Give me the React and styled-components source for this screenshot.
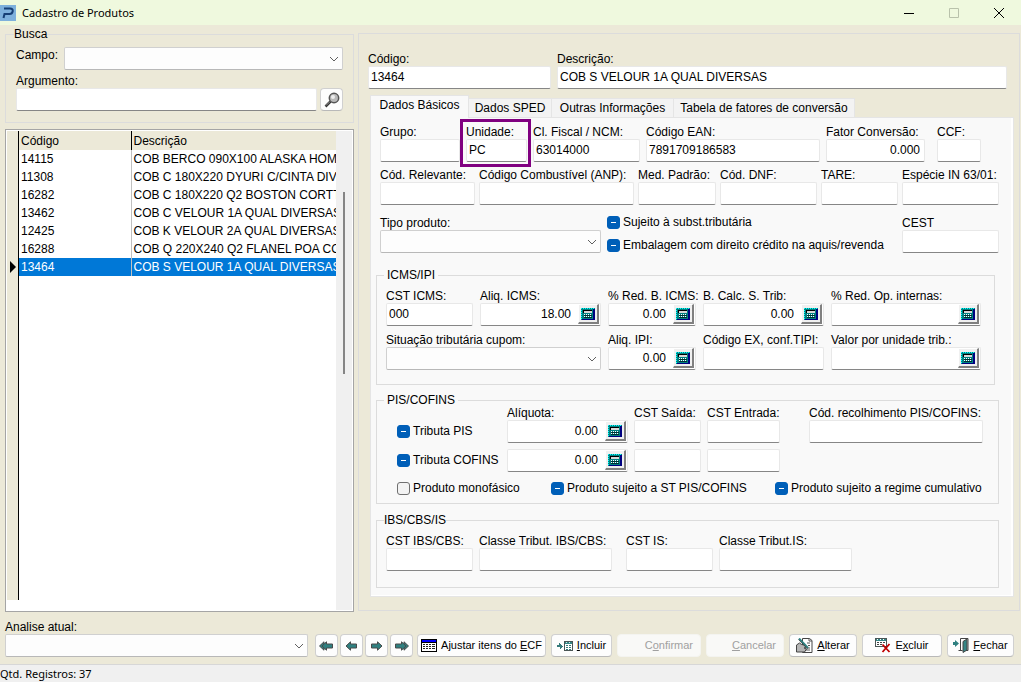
import React, { useEffect, useId, useRef } from "react";
import styled, { createGlobalStyle, css } from "styled-components";

const GlobalStyle = createGlobalStyle`
  *, *::before, *::after {
    box-sizing: border-box;
  }
  body {
    margin: 0;
    background: #ece9d8;
    color: #000;
    font: 12px/15px "Liberation Sans", Arial, sans-serif;
  }
  button, input, select {
    font: inherit;
    color: inherit;
    margin: 0;
  }
`;

const Window = styled.div`
  display: flex;
  flex-direction: column;
  min-height: 100vh;
  overflow: hidden;
`;

const TitleBar = styled.header`
  display: flex;
  align-items: center;
  height: 25px;
  background: #eff9de;
`;

const Title = styled.h1`
  flex: 1;
  margin: 0 0 0 6px;
  font: 11px/16px "Noto Sans", sans-serif;
`;

const WindowButton = styled.button`
  display: flex;
  align-items: center;
  justify-content: center;
  width: 45px;
  height: 25px;
  padding: 0;
  border: 0;
  background: none;
`;

const Main = styled.main`
  display: grid;
  grid-template-columns: 349fr 662fr;
  gap: 4px;
  flex: 1;
  padding: 4px 1px 0 5px;
`;

const Side = styled.div`
  display: flex;
  flex-direction: column;
  gap: 6px;
  min-width: 0;
`;

const Group = styled.fieldset`
  min-width: 0;
  margin: ${(p) => p.$margin || "0"};
  padding: ${(p) => p.$pad};
  border: 1px solid #dcdcdc;
`;

const Legend = styled.legend`
  padding: 0 ${(p) => (p.$tight ? 0 : 3)}px;
  margin-left: -2px;
  font-size: 12px;
  line-height: 10px;
`;

const Stack = styled.div`
  display: flex;
  flex-direction: column;
  gap: ${(p) => p.$gap || 0}px;
  padding: ${(p) => p.$pad || "0"};
`;

const Row = styled.div`
  display: flex;
  align-items: ${(p) => p.$align || "flex-end"};
  gap: ${(p) => p.$gap || 6}px;
  padding: ${(p) => p.$pad || "0"};
`;

const Cell = styled.div`
  position: relative;
  flex: ${(p) => p.$w} 1 0;
  min-width: 0;
  white-space: nowrap;
  ${(p) =>
    p.$marked &&
    css`
      &::after {
        content: "";
        position: absolute;
        inset: -5px -4px -5px -6px;
        border: 3px solid #800080;
        pointer-events: none;
      }
    `}
`;

const Label = styled.label`
  display: block;
  height: 15px;
  line-height: 16px;
  white-space: nowrap;
`;

const boxed = css`
  height: 23px;
  border: 1px solid #e8e8e8;
  border-bottom-color: #868686;
  border-radius: 2px;
  background: #fff;
`;

const TextInput = styled.input`
  ${boxed}
  display: block;
  width: 100%;
  min-width: 0;
  padding: 0 4px 2px 2px;
  outline: none;
  text-align: ${(p) => (p.$right ? "right" : "left")};
`;

const NumberBox = styled.div`
  ${boxed}
  display: flex;
  padding: 0 1px 0 0;
`;

const NumberInput = styled.input`
  flex: 1;
  width: 0;
  min-width: 0;
  padding: 0 7px 0 2px;
  border: 0;
  outline: none;
  background: none;
  text-align: right;
`;

const CalcButton = styled.button`
  display: flex;
  align-items: center;
  justify-content: center;
  width: 21px;
  height: 20px;
  padding: 0;
  border: 1px solid #fff;
  border-right: 2px solid #808080;
  border-bottom: 2px solid #808080;
  background: #f0f0f0;
`;

const SelectBox = styled.div`
  position: relative;
  flex: 1;
  svg {
    position: absolute;
    right: 4px;
    top: 9px;
    pointer-events: none;
  }
`;

const Select = styled.select`
  display: block;
  appearance: none;
  width: 100%;
  height: 23px;
  padding: 0 20px 0 4px;
  border: 1px solid #d0d0d0;
  border-bottom-color: #b8b8b8;
  border-radius: 2px;
  background: #fdfdfd;
`;

const CheckLabel = styled.label`
  display: flex;
  align-items: center;
  gap: 3px;
  height: 15px;
  white-space: nowrap;
`;

const Check = styled.input`
  appearance: none;
  flex: none;
  display: grid;
  place-items: center;
  width: 13px;
  height: 13px;
  border: 1px solid #707070;
  border-radius: 3px;
  background: #f3f3f3;
  &:indeterminate {
    border-color: #005fb8;
    background: #005fb8;
  }
  &:indeterminate::after {
    content: "";
    width: 5px;
    height: 1px;
    background: #fff;
  }
`;

const IconButton = styled.button`
  display: flex;
  align-items: center;
  justify-content: center;
  flex: none;
  gap: 4px;
  width: ${(p) => p.$w || 23}px;
  height: 23px;
  padding: 0;
  border: 1px solid #d0d0d0;
  border-bottom-color: #b9b9b9;
  border-radius: 4px;
  background: #fdfdfd;
  font-size: 11px;
  line-height: 17px;
  white-space: nowrap;
  &:disabled {
    justify-content: flex-end;
    padding-right: 7px;
    border-color: #f4f4f0;
    background: #f9f9f7;
    color: #a0a0a0;
  }
`;

const Grid = styled.div`
  display: flex;
  flex: 1;
  padding: 1px;
  border: 1px solid #a5a5a5;
  background: #fff;
`;

const Gutter = styled.div`
  width: 12px;
  margin-bottom: 10px;
  padding-top: 19px;
  border-right: 1px solid #000;
  background: #ece9d8;
`;

const GutterRow = styled.div`
  display: flex;
  align-items: center;
  justify-content: flex-end;
  height: 18px;
  padding-right: 2px;
`;

const Table = styled.table`
  width: 100%;
  table-layout: fixed;
  border-collapse: collapse;
`;

const TableArea = styled.div`
  flex: 1;
  min-width: 0;
`;

const cellStyle = css`
  padding: 1px 2px 0;
  overflow: hidden;
  text-align: left;
  font-weight: normal;
  white-space: nowrap;
  &:first-child {
    width: 112px;
  }
`;

const Th = styled.th`
  ${cellStyle}
  height: 19px;
  background: #ece9d8;
  &:first-child {
    border-right: 1px solid #000;
  }
`;

const Td = styled.td`
  ${cellStyle}
  height: 18px;
  &:first-child {
    border-right: 1px solid #c0c0c0;
  }
`;

const Tr = styled.tr`
  ${(p) =>
    p.$selected &&
    css`
      background: #0078d7;
      color: #fff;
    `}
`;

const ScrollTrack = styled.div`
  flex: none;
  width: 16px;
  padding: 61px 0 0 7px;
  background: #f0f0f0;
`;

const ScrollThumb = styled.div`
  width: 2px;
  height: 182px;
  background: #858585;
`;

const Detail = styled.section`
  margin: 4px 0 1px;
  padding: 17px 5px 11px 9px;
  min-width: 0;
  border: 1px solid #dcdcdc;
`;

const Tabs = styled.div`
  display: flex;
  align-items: flex-end;
  height: 22px;
  margin: 6px 0 0 2px;
`;

const Tab = styled.button`
  width: ${(p) => p.$w}px;
  height: 19px;
  padding: 0;
  border: 1px solid #e5e5e5;
  border-width: 1px 1px 0 0;
  background: #f3f3f3;
  white-space: nowrap;
  &[aria-selected="true"] {
    height: 23px;
    margin-bottom: -1px;
    padding-bottom: 3px;
    border-left-width: 1px;
    background: #f9f9f9;
    z-index: 1;
  }
`;

const Panel = styled.div`
  margin: 0 0 0 2px;
  padding: 6px 14px 8px 5px;
  border: 1px solid #e5e5e5;
  background: #f9f9f9;
  box-shadow: inset -2px -1px #fff;
`;

const Footer = styled.footer`
  display: flex;
  align-items: flex-end;
  padding: 7px 7px 7px 5px;
`;

const StatusBar = styled.div`
  height: 18px;
  border-top: 1px solid #d7d7d7;
  background: #f0f0f0;
  font: 11px/18px "Noto Sans", sans-serif;
`;

/* ---------- icons ---------- */

const PIcon = () => (
  <svg width="16" height="16" viewBox="0 0 16 16">
    <rect width="16" height="16" fill="#7eb0dc" />
    <path
      d="M4 3.500h6q3.200 0 2.700 2.700T9.500 9H4.500L3.500 13"
      fill="none"
      stroke="#173f75"
      strokeWidth="2"
    />
  </svg>
);

const Chevron = () => (
  <svg width="10" height="6" viewBox="0 0 10 6">
    <path d="M1 1l4 4 4-4" fill="none" stroke="#606060" />
  </svg>
);

const CalcIcon = () => (
  <svg width="14" height="12" viewBox="0 0 14 12" shapeRendering="crispEdges">
    <path d="M0 0h14v12H0z" fill="#008080" />
    <path d="M12 1h2v11H1v-1h11z" fill="#000080" />
    <path
      d="M0 0h1v1H0zM2 0h1v1H2zM4 0h1v1H4zM6 0h1v1H6zM8 0h1v1H8zM10 0h1v1h-1zM12 0h1v1h-1zM0 2h1v1H0zM0 4h1v1H0zM0 6h1v1H0zM0 8h1v1H0zM0 10h1v1H0z"
      fill="#00ffff"
    />
    <path d="M2 2h9v3H2z" fill="#000" />
    <path d="M3 3h8v2H3z" fill="#d8d8d8" />
    <path d="M3 7h8v1H3zM3 9h8v1H3z" fill="#003030" />
    <path
      d="M3 6h1v1H3zM5 6h1v1H5zM7 6h1v1H7zM9 6h1v1H9zM3 8h1v1H3zM5 8h1v1H5zM7 8h1v1H7zM9 8h1v1H9z"
      fill="#fff"
    />
  </svg>
);

const SearchIcon = () => (
  <svg width="16" height="16" viewBox="0 0 16 16">
    <path d="M1.500 14.500l5-5" stroke="#333" strokeWidth="2.500" />
    <path d="M2 13.500l4-4" stroke="#999" strokeWidth="1" />
    <circle cx="10" cy="6" r="4.700" fill="#b9b9b9" stroke="#555" strokeWidth="1.500" />
    <circle cx="9" cy="5" r="2" fill="#ededed" />
  </svg>
);

const ArrowSvg = styled.svg`
  transform: ${(p) => (p.$right ? "scaleX(-1)" : "none")};
`;

const ArrowIcon = ({ double, right }) => (
  <ArrowSvg
    $right={right}
    width={double ? 15 : 13}
    height="10"
    viewBox={double ? "-2 0 15 10" : "0 0 13 10"}
  >
    {double && <path d="M-1.500 5L3 .8v8.400z" fill="#2f8080" stroke="#4a4a4a" />}
    <path d="M1 5L5.500.8V3h6v4h-6v2.200z" fill="#2f8080" stroke="#4a4a4a" />
  </ArrowSvg>
);

const TableIcon = () => (
  <svg width="16" height="13" viewBox="0 0 16 13" shapeRendering="crispEdges">
    <path d="M0 0h16v13H0z" />
    <path d="M1 1h14v2H1z" fill="#0000ff" />
    <path d="M1 4h14v8H1z" fill="#fff" />
    <path
      d="M2 5h2v1H2zM5 5h2v1H5zM8 5h2v1H8zM11 5h3v1h-3zM2 7h2v1H2zM5 7h2v1H5zM8 7h2v1H8zM11 7h3v1h-3zM2 9h2v1H2zM5 9h2v1H5zM8 9h2v1H8zM11 9h3v1h-3z"
      fill="#222"
    />
  </svg>
);

const AddIcon = () => (
  <svg width="16" height="10" viewBox="0 0 16 10" shapeRendering="crispEdges">
    <path d="M0 4h2V2h1v1h1v1h1v1h1v1H5v1H4v1H3V6H0z" fill="#357a7a" />
    <path d="M7 0h9v10H7z" fill="#4a5555" />
    <path d="M8 1h7v2H8z" fill="#358585" />
    <path d="M9 1h1v1H9zM12 1h1v1h-1z" fill="#cde5e5" />
    <path d="M8 3h7v6H8z" fill="#fff" />
    <path
      d="M9 4h2v1H9zM12 4h2v1h-2zM9 6h2v1H9zM12 6h2v1h-2zM9 8h2v1H9zM12 8h2v1h-2z"
      fill="#357a7a"
    />
  </svg>
);

const EditIcon = () => (
  <svg width="17" height="15" viewBox="0 0 17 15">
    <path d="M6.500.5h7l2.500 2v12H6.500z" fill="#fff" stroke="#444" />
    <path d="M13 .5V3h3M11 5h3M12 7.500h2M11 10h3M10 12h4" fill="none" stroke="#555" />
    <path
      d="M.5 14V7l3-2 2 1.500 3 .5 1.500 2-2 1 2.500 1-2 3z"
      fill="#b5b5b5"
      stroke="#444"
    />
    <path d="M3 .5l9 9.500" stroke="#2f8080" strokeWidth="2" />
    <path d="M2.500 1.500l9 9.500" stroke="#333" strokeWidth=".7" />
  </svg>
);

const DeleteIcon = () => (
  <svg width="16" height="15" viewBox="0 0 16 15">
    <g shapeRendering="crispEdges">
      <path d="M0 0h12v9H0z" fill="#4a5555" />
      <path d="M1 1h10v2H1z" fill="#358585" />
      <path d="M2 1h1v1H2zM5 1h1v1H5zM8 1h1v1H8z" fill="#fff" />
      <path d="M1 3h10v5H1z" fill="#fff" />
      <path d="M2 4h2v1H2zM5 4h2v1H5zM8 4h2v1H8zM2 6h2v1H2zM5 6h2v1H5z" fill="#444" />
    </g>
    <path d="M7.500 6.500l7 7.500M14.500 6l-7 8" stroke="#c00000" strokeWidth="1.800" />
  </svg>
);

const ExitIcon = () => (
  <svg width="16" height="15" viewBox="0 0 16 15">
    <path d="M0 4h2V2l4 3.500L2 9V7H0z" fill="#2f8080" />
    <path d="M7.500 12.500V.5h7.500v12h-2M5.500 12.500h4" fill="none" stroke="#444" />
    <path d="M10 3.500L14 1v11l-4 2.500z" fill="#358585" stroke="#444" />
  </svg>
);

/* ---------- form parts ---------- */

const DropDown = ({ id }) => (
  <SelectBox>
    <Select id={id}>
      <option value="" />
    </Select>
    <Chevron />
  </SelectBox>
);

const Field = ({ label, name, w, value = "", kind = "text", right, marked }) => {
  const id = useId();
  return (
    <Cell $w={w} $marked={marked}>
      {label && <Label htmlFor={id}>{label}</Label>}
      {kind === "text" && (
        <TextInput id={id} aria-label={name} defaultValue={value} $right={right} />
      )}
      {kind === "calc" && (
        <NumberBox>
          <NumberInput id={id} aria-label={name} defaultValue={value} />
          <CalcButton type="button" aria-label="Calculadora">
            <CalcIcon />
          </CalcButton>
        </NumberBox>
      )}
      {kind === "select" && <DropDown id={id} />}
    </Cell>
  );
};

const CheckField = ({ children, mixed = true }) => {
  const ref = useRef(null);

  useEffect(() => {
    ref.current.indeterminate = mixed;
  }, [mixed]);

  return (
    <CheckLabel>
      <Check type="checkbox" ref={ref} />
      {children}
    </CheckLabel>
  );
};

const products = [
  ["14115", "COB BERCO 090X100 ALASKA HOME"],
  ["11308", "COB C 180X220 DYURI C/CINTA DIV"],
  ["16282", "COB C 180X220 Q2 BOSTON CORTT"],
  ["13462", "COB C VELOUR 1A QUAL DIVERSAS"],
  ["12425", "COB K VELOUR 2A QUAL DIVERSAS"],
  ["16288", "COB Q 220X240 Q2 FLANEL POA CO"],
  ["13464", "COB S VELOUR 1A QUAL DIVERSAS"],
];
const current = "13464";

const SearchGroup = () => (
  <Group $pad="8px 10px 11px 10px">
    <Legend $tight>Busca</Legend>
    <Row $align="flex-start">
      <Label htmlFor="campo">Campo:</Label>
      <DropDown id="campo" />
    </Row>
    <Stack $pad="3px 0 0">
      <Label htmlFor="argumento">Argumento:</Label>
      <Row $gap={3}>
        <TextInput id="argumento" />
        <IconButton type="button" aria-label="Pesquisar">
          <SearchIcon />
        </IconButton>
      </Row>
    </Stack>
  </Group>
);

const ProductGrid = () => (
  <Grid>
    <Gutter>
      {products.map(([code]) => (
        <GutterRow key={code}>
          {code === current && (
            <svg width="6" height="12" viewBox="0 0 6 12">
              <path d="M0 0l6 6-6 6z" />
            </svg>
          )}
        </GutterRow>
      ))}
    </Gutter>
    <TableArea>
      <Table>
        <thead>
          <tr>
            <Th>Código</Th>
            <Th>Descrição</Th>
          </tr>
        </thead>
        <tbody>
          {products.map(([code, name]) => (
            <Tr key={code} $selected={code === current}>
              <Td>{code}</Td>
              <Td>{name}</Td>
            </Tr>
          ))}
        </tbody>
      </Table>
    </TableArea>
    <ScrollTrack>
      <ScrollThumb />
    </ScrollTrack>
  </Grid>
);

const BasicData = () => (
  <Panel role="tabpanel">
    <Stack $gap={5}>
      <Row $pad="0 0 0 4px">
        <Field label="Grupo:" w={80} />
        <Field label="Unidade:" w={61} value="PC" marked />
        <Field label="Cl. Fiscal / NCM:" w={107} value="63014000" />
        <Field label="Código EAN:" w={174} value="7891709186583" />
        <Field label="Fator Conversão:" w={99} value="0.000" right />
        <Cell $w={0} />
        <Field label="CCF:" w={44} />
        <Cell $w={12} />
      </Row>
      <Row $gap={4} $pad="0 0 0 4px">
        <Field label="Cód. Relevante:" w={95} />
        <Field label="Código Combustível (ANP):" w={155} />
        <Field label="Med. Padrão:" w={78} />
        <Field label="Cód. DNF:" w={97} />
        <Field label="TARE:" w={77} />
        <Field label="Espécie IN 63/01:" w={97} />
      </Row>
      <Row $pad="5px 0 0 4px" $align="flex-start">
        <Field label="Tipo produto:" w={221} kind="select" />
        <Cell $w={289}>
          <Stack $gap={8}>
            <CheckField>Sujeito à subst.tributária</CheckField>
            <CheckField>Embalagem com direito crédito na aquis/revenda</CheckField>
          </Stack>
        </Cell>
        <Field label="CEST" w={97} />
      </Row>
    </Stack>

    <Group $margin="17px 4px 0 0" $pad="8px 13px 14px 9px">
      <Legend>ICMS/IPI</Legend>
      <Stack $gap={6}>
        <Row $gap={7}>
          <Field label="CST ICMS:" w={87} value="000" />
          <Field label="Aliq. ICMS:" w={121} value="18.00" kind="calc" />
          <Field label="% Red. B. ICMS:" w={88} value="0.00" kind="calc" />
          <Field label="B. Calc. S. Trib:" w={121} value="0.00" kind="calc" />
          <Field label="% Red. Op. internas:" w={150} kind="calc" />
        </Row>
        <Row $gap={7}>
          <Field label="Situação tributária cupom:" w={215} kind="select" />
          <Field label="Aliq. IPI:" w={88} value="0.00" kind="calc" />
          <Field label="Código EX, conf.TIPI:" w={121} />
          <Field label="Valor por unidade trib.:" w={150} kind="calc" />
        </Row>
      </Stack>
    </Group>

    <Group $margin="10px 0 0" $pad="0 15px 7px 9px">
      <Legend>PIS/COFINS</Legend>
      <Stack $gap={6}>
        <Row $pad="0 0 0 11px">
          <Cell $w={104}>
            <Row $pad="0 0 4px">
              <CheckField>Tributa PIS</CheckField>
            </Row>
          </Cell>
          <Field label="Alíquota:" w={121} value="0.00" kind="calc" />
          <Field label="CST Saída:" w={67} />
          <Field label="CST Entrada:" w={73} />
          <Cell $w={17} />
          <Field label="Cód. recolhimento PIS/COFINS:" w={174} />
        </Row>
        <Row $pad="0 0 0 11px">
          <Cell $w={104}>
            <Row $pad="0 0 4px">
              <CheckField>Tributa COFINS</CheckField>
            </Row>
          </Cell>
          <Field name="Alíquota COFINS" w={121} value="0.00" kind="calc" />
          <Field name="CST Saída COFINS" w={67} />
          <Field name="CST Entrada COFINS" w={73} />
          <Cell $w={17} />
          <Cell $w={174} />
        </Row>
        <Row $pad="3px 0 0 11px">
          <Cell $w={148}>
            <CheckField mixed={false}>Produto monofásico</CheckField>
          </Cell>
          <Cell $w={218}>
            <CheckField>Produto sujeito a ST PIS/COFINS</CheckField>
          </Cell>
          <Cell $w={208}>
            <CheckField>Produto sujeito a regime cumulativo</CheckField>
          </Cell>
        </Row>
      </Stack>
    </Group>

    <Group $margin="11px 0 0" $pad="8px 9px 16px 9px">
      <Legend $tight>IBS/CBS/IS</Legend>
      <Row>
        <Field label="CST IBS/CBS:" w={87} />
        <Field label="Classe Tribut. IBS/CBS:" w={133} />
        <Cell $w={2} />
        <Field label="CST IS:" w={87} />
        <Field label="Classe Tribut.IS:" w={133} />
        <Cell $w={131} />
      </Row>
    </Group>
  </Panel>
);

function App() {
  return (
    <Window>
      <GlobalStyle />
      <TitleBar>
        <PIcon />
        <Title>Cadastro de Produtos</Title>
        <WindowButton aria-label="Minimizar">
          <svg width="10" height="10" viewBox="0 0 10 10">
            <path d="M0 5.500h10" stroke="#000" />
          </svg>
        </WindowButton>
        <WindowButton aria-label="Maximizar" disabled>
          <svg width="10" height="10" viewBox="0 0 10 10">
            <path d="M.5.5h9v9h-9z" fill="none" stroke="#b9c2ab" />
          </svg>
        </WindowButton>
        <WindowButton aria-label="Fechar janela">
          <svg width="10" height="10" viewBox="0 0 10 10">
            <path d="M0 0l10 10M10 0L0 10" stroke="#000" />
          </svg>
        </WindowButton>
      </TitleBar>

      <Main>
        <Side>
          <SearchGroup />
          <ProductGrid />
        </Side>
        <Detail>
          <Row $pad="0 7px 0 0">
            <Field label="Código:" w={183} value="13464" />
            <Field label="Descrição:" w={450} value="COB S VELOUR 1A QUAL DIVERSAS" />
          </Row>
          <Tabs role="tablist">
            <Tab role="tab" aria-selected="true" $w={99}>
              Dados Básicos
            </Tab>
            <Tab role="tab" $w={83}>
              Dados SPED
            </Tab>
            <Tab role="tab" $w={122}>
              Outras Informações
            </Tab>
            <Tab role="tab" $w={181}>
              Tabela de fatores de conversão
            </Tab>
          </Tabs>
          <BasicData />
        </Detail>
      </Main>

      <Footer>
        <Field label="Analise atual:" w={1} kind="select" />
        <Row $gap={2} $pad="0 4px 0 7px">
          <IconButton aria-label="Primeiro">
            <ArrowIcon double />
          </IconButton>
          <IconButton aria-label="Anterior">
            <ArrowIcon />
          </IconButton>
          <IconButton aria-label="Próximo">
            <ArrowIcon right />
          </IconButton>
          <IconButton aria-label="Último">
            <ArrowIcon double right />
          </IconButton>
        </Row>
        <Row $gap={5}>
          <IconButton $w={129}>
            <TableIcon />
            <span>
              Ajustar itens do <u>E</u>CF
            </span>
          </IconButton>
          <IconButton $w={61}>
            <AddIcon />
            <span>
              <u>I</u>ncluir
            </span>
          </IconButton>
          <IconButton $w={84} disabled>
            <span>
              C<u>o</u>nfirmar
            </span>
          </IconButton>
          <IconButton $w={78} disabled>
            <span>
              <u>C</u>ancelar
            </span>
          </IconButton>
          <IconButton $w={68}>
            <EditIcon />
            <span>
              <u>A</u>lterar
            </span>
          </IconButton>
          <IconButton $w={80}>
            <DeleteIcon />
            <span>
              E<u>x</u>cluir
            </span>
          </IconButton>
          <IconButton $w={67}>
            <ExitIcon />
            <span>
              <u>F</u>echar
            </span>
          </IconButton>
        </Row>
      </Footer>
      <StatusBar>Qtd. Registros: 37</StatusBar>
    </Window>
  );
}

export default App;
